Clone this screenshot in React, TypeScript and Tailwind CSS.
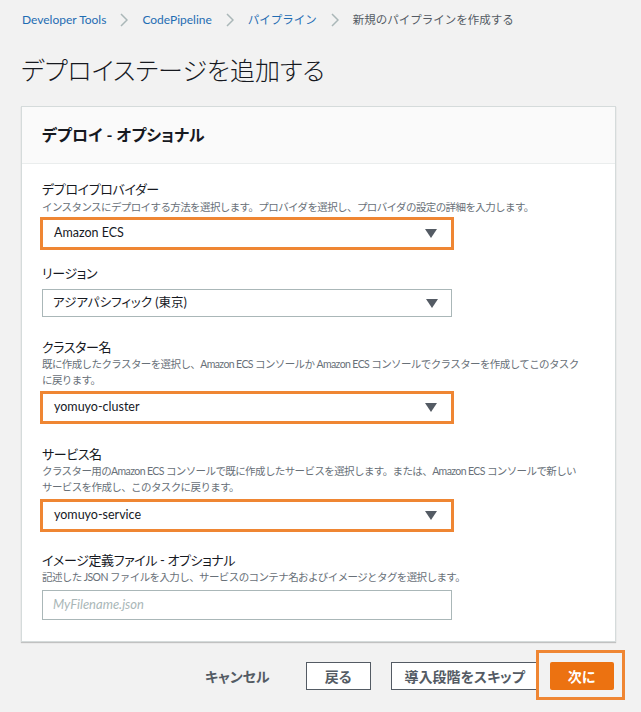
import React from "react";

const FONT = "[font-family:Lato,'Noto_Sans_CJK_JP',sans-serif]";

function Arrow() {
  return (
    <svg width="12" height="9" viewBox="0 0 12 9" className="shrink-0">
      <path d="M0 0 H12 L6 9 Z" fill="#545b64" />
    </svg>
  );
}

function Select({ value, highlight }: { value: string; highlight?: boolean }) {
  if (highlight) {
    return (
      <div className="ml-[-2px] w-[414px] h-[33px] border-[3px] border-[#ef8633] bg-white flex items-center justify-between pl-[11px] pr-[14px]">
        <span className="text-[12.5px] text-[#16191f] [font-feature-settings:'palt']">{value}</span>
        <Arrow />
      </div>
    );
  }
  return (
    <div className="w-[410px] h-[28px] border border-[#aab7b8] bg-white flex items-center justify-between pl-[10px] pr-[13px]">
      <span className="text-[12.5px] text-[#16191f] [font-feature-settings:'palt']">{value}</span>
      <Arrow />
    </div>
  );
}

function Label({ children }: { children: React.ReactNode }) {
  return (
    <div className="text-[13px] leading-[17px] tracking-[-0.4px] text-[#16191f] [font-feature-settings:'palt']">
      {children}
    </div>
  );
}

function Desc({ children }: { children: React.ReactNode }) {
  return (
    <div className="text-[10.5px] leading-[16px] text-[#687078] tracking-[-0.6px] w-[540px]">
      {children}
    </div>
  );
}

function Chevron() {
  return (
    <svg width="8" height="14" viewBox="0 0 8 14">
      <path d="M1 1 L7 7 L1 13" fill="none" stroke="#aab7b8" strokeWidth="1.5" />
    </svg>
  );
}

export default function App() {
  return (
    <div className={`w-[641px] h-[712px] bg-[#f2f2f2] overflow-hidden ${FONT}`}>
      {/* breadcrumb */}
      <div className="pt-[11px] pl-[22px] h-[29px] flex items-center gap-[14px] text-[12px] leading-[18px]">
        <span className="text-[#1f6db3]">Developer Tools</span>
        <Chevron />
        <span className="text-[#1f6db3]">CodePipeline</span>
        <Chevron />
        <span className="text-[#1f6db3] text-[11.5px]">パイプライン</span>
        <Chevron />
        <span className="text-[#545b64] text-[11.5px]">新規のパイプラインを作成する</span>
      </div>
      {/* title */}
      <div className="pl-[21px] mt-[26px] h-[30px] text-[25px] leading-[30px] font-light text-[#16191f] [font-feature-settings:'palt']">
        デプロイステージを追加する
      </div>
      {/* card */}
      <div className="mt-[21px] ml-[21px] w-[595px] bg-white border border-[#d5dbdb] shadow-[0_1px_1px_rgba(0,0,0,0.2)]">
        <div className="h-[57px] bg-[#fafafa] border-b border-[#eaeded] flex items-center pl-[20px]">
          <span className="text-[16px] font-bold text-[#16191f] [font-feature-settings:'palt']">デプロイ - オプショナル</span>
        </div>
        <div className="pl-[20px] pt-[17px] pb-[21px]">
          <Label>デプロイプロバイダー</Label>
          <div className="mt-[1px]">
            <Desc>インスタンスにデプロイする方法を選択します。プロバイダを選択し、プロバイダの設定の詳細を入力します。</Desc>
          </div>
          <div className="mt-[2px]">
            <Select value="Amazon ECS" highlight />
          </div>

          <div className="mt-[15px]">
            <Label>リージョン</Label>
          </div>
          <div className="mt-[7px]">
            <Select value="アジアパシフィック (東京)" />
          </div>

          <div className="mt-[22px]">
            <Label>クラスター名</Label>
          </div>
          <Desc>既に作成したクラスターを選択し、Amazon ECS コンソールか Amazon ECS コンソールでクラスターを作成してこのタスクに戻ります。</Desc>
          <div className="mt-[3px]">
            <Select value="yomuyo-cluster" highlight />
          </div>

          <div className="mt-[22px]">
            <Label>サービス名</Label>
          </div>
          <Desc>クラスター用のAmazon ECS コンソールで既に作成したサービスを選択します。または、Amazon ECS コンソールで新しいサービスを作成し、このタスクに戻ります。</Desc>
          <div className="mt-[4px]">
            <Select value="yomuyo-service" highlight />
          </div>

          <div className="mt-[20px]">
            <Label>イメージ定義ファイル - オプショナル</Label>
          </div>
          <Desc>記述した JSON ファイルを入力し、サービスのコンテナ名およびイメージとタグを選択します。</Desc>
          <div className="mt-[5px] w-[410px] h-[30px] border border-[#aab7b8] bg-white flex items-center pl-[10px]">
            <span className="text-[13px] italic text-[#aab7b8]">MyFilename.json</span>
          </div>
        </div>
      </div>
      {/* buttons */}
      <div className="mt-[20px] flex items-center h-[28px] [font-feature-settings:'palt']">
        <span className="ml-[205px] text-[14px] font-bold text-[#545b64]">キャンセル</span>
        <div className="ml-[36px] w-[65px] h-[28px] border border-[#545b64] bg-white flex items-center justify-center text-[14px] font-bold text-[#545b64]">
          戻る
        </div>
        <div className="ml-[20px] w-[148px] h-[28px] border border-[#545b64] bg-white flex items-center justify-center text-[14px] font-bold text-[#545b64]">
          導入段階をスキップ
        </div>
        <div className="relative ml-[11px]">
          <div className="absolute left-[-14px] top-[-12px] w-[89px] h-[50px] border-[3px] border-[#ef8633]" />
          <div className="relative w-[64px] h-[28px] bg-[#ec7211] rounded-[2px] flex items-center justify-center text-[14px] font-bold text-white">
            次に
          </div>
        </div>
      </div>
    </div>
  );
}
